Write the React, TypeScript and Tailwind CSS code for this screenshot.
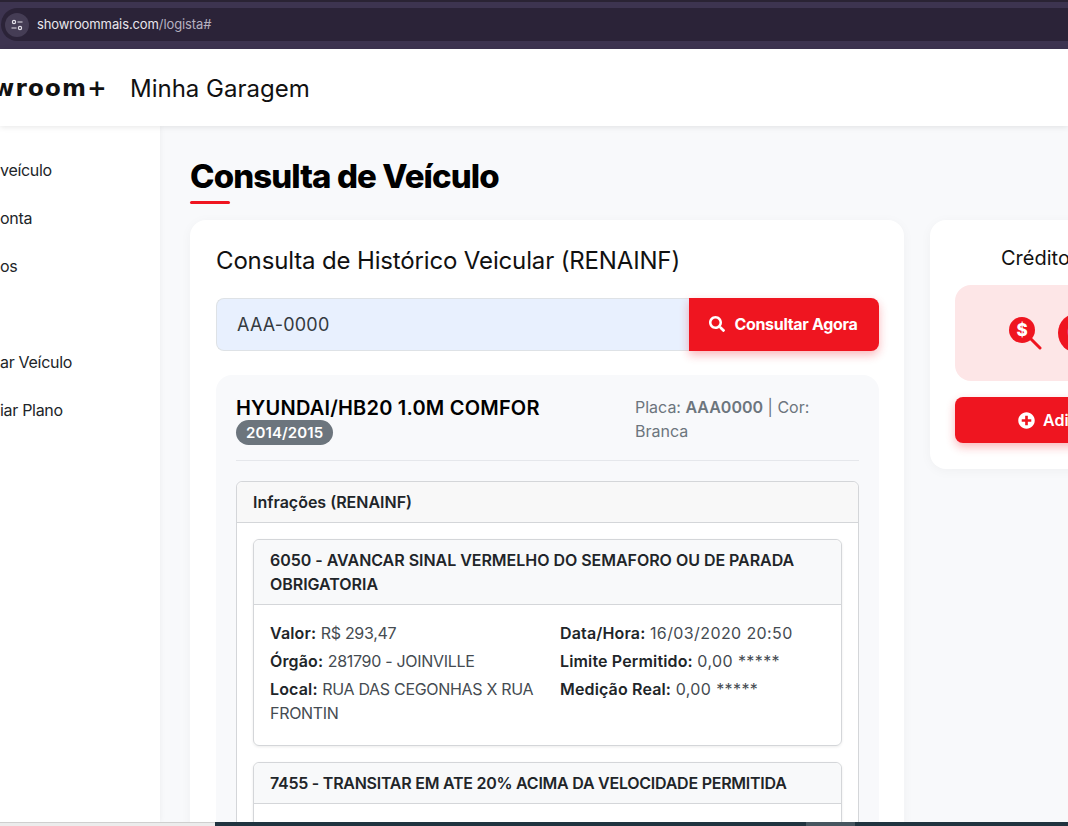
import { FaSearch, FaPlusCircle } from 'react-icons/fa';

const font = { fontFamily: 'Inter, "Noto Sans", sans-serif' };

const sideItems = [
  { label: 'veículo', pad: 'mt-[35px]' },
  { label: 'onta', pad: 'mt-[30px]' },
  { label: 'os', pad: 'mt-[30px]' },
  { label: 'ar Veículo', pad: 'mt-[78px]' },
  { label: 'iar Plano', pad: 'mt-[30px]' },
];

function Field({ label, value, wide }: { label: string; value: string; wide?: boolean }) {
  return (
    <p className="mb-1 text-[16px] leading-6 text-[#454b51]">
      <b className="font-semibold tracking-[0.15px] text-[#212529]">{label}:</b>{' '}
      <span className={wide ? 'tracking-[0.4px]' : 'tracking-[-0.3px]'}>{value}</span>
    </p>
  );
}

function CreditIcon() {
  return (
    <svg width="34" height="34" viewBox="0 0 34 34" className="shrink-0">
      <path d="M22 22l10 10" stroke="#ef1520" strokeWidth="3" strokeLinecap="round" />
      <circle cx="14" cy="14" r="13" fill="#ef1520" />
      <text x="14" y="20" textAnchor="middle" fontSize="17" fontWeight="800" fill="#fff" fontFamily="Inter, sans-serif">$</text>
    </svg>
  );
}

export default function App() {
  return (
    <div style={font} className="flex h-[826px] w-[1068px] flex-col overflow-hidden bg-[#f8f9fb] text-[#111]">
      {/* browser bar */}
      <div className="h-[2px] bg-[#2a2334]" />
      <div className="flex h-[47px] bg-[#3d3450] pt-[6px] pb-[8px] pl-[1px]">
        <div className="flex h-[33px] flex-1 items-center rounded-l-[17px] bg-[#2b2338]">
          <div className="ml-[4px] flex h-[24px] w-[24px] items-center justify-center rounded-full bg-[#453d55]">
            <svg width="14" height="14" viewBox="0 0 14 14" fill="none" stroke="#e5e2ea" strokeWidth="1.2">
              <circle cx="4" cy="4" r="1.6" />
              <path d="M7.5 4h5M1.5 10h5" />
              <circle cx="10" cy="10" r="1.6" />
            </svg>
          </div>
          <span className="ml-[8px] text-[13px] tracking-[-0.1px] text-[#e8e6ec]">
            showroommais.com<span className="text-[#b6b1c0]">/logista#</span>
          </span>
        </div>
      </div>

      {/* site header */}
      <header className="z-10 flex h-[77px] shrink-0 items-center bg-white shadow-[0_1px_6px_rgba(0,0,0,0.1)]">
        <span className="ml-[-7px] w-[137px] pt-[2px] text-[23px] font-bold tracking-[1.2px]" style={{ fontFamily: '"DejaVu Sans", sans-serif' }}>
          wroom+
        </span>
        <span className="pt-[2px] text-[24px] tracking-[0px] text-[#111]">Minha Garagem</span>
      </header>

      <div className="flex min-h-0 flex-1">
        <aside className="flex w-[160px] shrink-0 flex-col bg-white shadow-[0_0_6px_rgba(0,0,0,0.06)]">
          {sideItems.map((item) => (
            <div key={item.label} className={`${item.pad} text-[16px] leading-[18px] tracking-[-0.3px] text-[#212529]`}>
              {item.label}
            </div>
          ))}
        </aside>

        <main className="min-w-0 flex-1 pl-[30px] pt-[28px]">
          <h1 className="text-[33px] leading-[44px] font-extrabold tracking-[-0.9px] text-black">Consulta de Veículo</h1>
          <div className="mt-[3px] h-[3px] w-[40px] rounded-full bg-[#ef1520]" />

          <div className="mt-[16px] flex items-start gap-[26px]">
            <section className="h-[700px] w-[714px] shrink-0 rounded-[16px] bg-white pl-[26px] pr-[25px] pt-[25px] shadow-[0_2px_12px_rgba(0,0,0,0.04)]">
              <h2 className="text-[24px] leading-[32px] tracking-[-0.15px] text-[#111]">Consulta de Histórico Veicular (RENAINF)</h2>

              <div className="mt-[21px] flex h-[53px] shrink-0">
                <div className="flex flex-1 items-center rounded-l-[8px] border border-[#dee2e6] border-r-0 bg-[#e8f0fe] pl-[20px] text-[18px] tracking-[0.2px] text-[#343a40]">
                  AAA-0000
                </div>
                <button className="flex w-[190px] items-center justify-center gap-[9px] rounded-r-[8px] bg-[#ef1520] pb-[1px] pr-[1px] text-[16px] font-bold tracking-[-0.3px] text-white shadow-[0_4px_10px_rgba(239,21,32,0.3)]">
                  <FaSearch size={16} />
                  Consultar Agora
                </button>
              </div>

              <div className="mt-[24px] rounded-[16px] bg-[#f8f9fb] px-[20px] pt-[21px]">
                <div className="flex border-b border-[#e5e7eb] pb-[15px]">
                  <div className="w-[399px]">
                    <div className="text-[20px] leading-[24px] font-semibold tracking-[0.2px] text-black">HYUNDAI/HB20 1.0M COMFOR</div>
                    <span className="inline-block h-[25px] rounded-full bg-[#6c757d] px-[10px] text-[15px] leading-[25px] font-semibold tracking-[0.1px] text-white">2014/2015</span>
                  </div>
                  <p className="mt-[-1px] flex-1 text-[16px] leading-6 text-[#6c757d]">
                    Placa: <b className="font-semibold">AAA0000</b> | Cor: Branca
                  </p>
                </div>

                <div className="mt-[20px] rounded-[6px] border border-[#d4d6d9] bg-white">
                  <div className="h-[41px] rounded-t-[6px] border-b border-[#d4d6d9] bg-[#f8f8f8] pl-[16px] text-[16px] leading-[40px] font-semibold tracking-[0px] text-[#212529]">
                    Infrações (RENAINF)
                  </div>
                  <div className="px-[16px] pt-[16px]">
                    <article className="rounded-[6px] border border-[#d4d6d9] shadow-[0_1px_3px_rgba(0,0,0,0.08)]">
                      <div className="rounded-t-[6px] border-b border-[#d4d6d9] bg-[#f8f9fa] px-[16px] py-[8px] text-[16px] leading-6 font-semibold tracking-[-0.03px] text-[#212529]">
                        6050 - AVANCAR SINAL VERMELHO DO SEMAFORO OU DE PARADA OBRIGATORIA
                      </div>
                      <div className="flex p-[16px]">
                        <div className="w-[290px] pr-[16px]">
                          <Field label="Valor" value="R$ 293,47" />
                          <Field label="Órgão" value="281790 - JOINVILLE" />
                          <Field label="Local" value="RUA DAS CEGONHAS X RUA FRONTIN" />
                        </div>
                        <div className="flex-1">
                          <Field label="Data/Hora" value="16/03/2020 20:50" wide />
                          <Field label="Limite Permitido" value="0,00 *****" wide />
                          <Field label="Medição Real" value="0,00 *****" wide />
                        </div>
                      </div>
                    </article>
                    <article className="mt-[16px] rounded-[6px] border border-[#d4d6d9] shadow-[0_1px_3px_rgba(0,0,0,0.08)]">
                      <div className="rounded-t-[6px] border-b border-[#d4d6d9] bg-[#f8f9fa] px-[16px] py-[8px] text-[16px] leading-6 font-semibold tracking-[-0.25px] text-[#212529]">
                        7455 - TRANSITAR EM ATE 20% ACIMA DA VELOCIDADE PERMITIDA
                      </div>
                      <div className="h-[100px]" />
                    </article>
                  </div>
                </div>
              </div>
            </section>

            <section className="h-[249px] w-[300px] shrink-0 rounded-[16px] bg-white px-[25px] pt-[24px] shadow-[0_2px_12px_rgba(0,0,0,0.04)]">
              <h3 className="pl-[46px] text-[20px] leading-[28px] text-[#111]">Créditos</h3>
              <div className="mt-[13px] flex h-[96px] items-center rounded-[16px] bg-[#fde6e7] pl-[53px]">
                <CreditIcon />
                <span className="ml-[16px] flex h-[40px] w-[60px] items-center rounded-[20px] bg-[#ef1520] pl-[9px] text-[24px] font-bold text-white">0</span>
              </div>
              <button className="mt-[16px] flex h-[46px] w-full items-center gap-[8px] rounded-[8px] bg-[#ef1520] pl-[63px] text-[16px] font-semibold text-white shadow-[0_4px_10px_rgba(239,21,32,0.3)]">
                <FaPlusCircle size={17} />
                Adicionar
              </button>
            </section>
          </div>
        </main>
      </div>

      {/* taskbar sliver */}
      <div className="flex h-[4px] shrink-0">
        <div className="w-[215px] border-t border-[#cfcfcf] bg-[#ececec]" />
        <div className="w-[591px] bg-[#20333f]" />
        <div className="w-[49px] bg-[#46555f]" />
        <div className="flex-1 bg-[#20333f]" />
      </div>
    </div>
  );
}
